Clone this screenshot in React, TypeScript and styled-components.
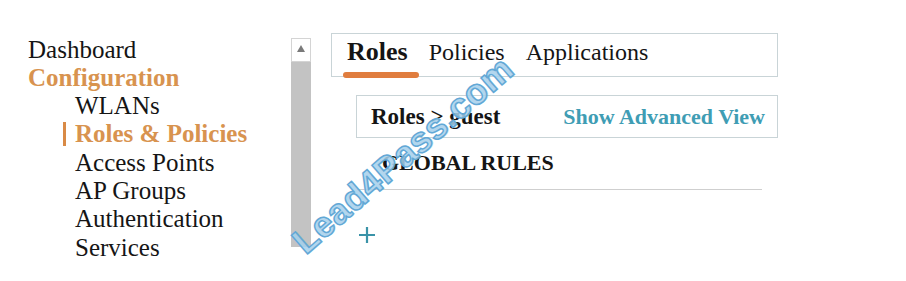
import React from "react";
import styled, { createGlobalStyle } from "styled-components";

const Global = createGlobalStyle`
  html, body { margin: 0; padding: 0; background: #ffffff; }
  body { font-family: "Liberation Serif", "Times New Roman", serif; color: #151515; }
`;

const Page = styled.div`
  position: relative;
  width: 906px;
  height: 281px;
  display: flex;
  align-items: flex-start;
  overflow: hidden;
`;

const Nav = styled.nav`
  width: 263px;
  padding: 35.5px 0 0 28px;
  display: flex;
  flex-direction: column;
`;

const NavItem = styled.div<{ $level?: number; $active?: boolean; $section?: boolean }>`
  position: relative;
  font-size: 25px;
  line-height: 28.3px;
  white-space: nowrap;
  padding-left: ${(p) => (p.$level ? 47 : 0)}px;
  font-weight: ${(p) => (p.$active || p.$section ? 700 : 400)};
  color: ${(p) => (p.$active || p.$section ? "#d8934f" : "#151515")};
  ${(p) =>
    p.$active
      ? `&::before { content: ""; position: absolute; left: 35px; top: 2px; width: 3px; height: 24px; background: #d98a46; }`
      : ""}
`;

const ScrollBar = styled.div`
  margin-top: 38px;
  width: 20px;
  height: 209px;
  display: flex;
  flex-direction: column;
  background: #c3c3c3;
`;

const ScrollButton = styled.div`
  box-sizing: border-box;
  height: 24px;
  background: #ffffff;
  border: 1px solid #d4d4d4;
  display: flex;
  justify-content: center;
  padding-top: 6px;
`;

const Arrow = styled.div`
  width: 0;
  height: 0;
  border-left: 4px solid transparent;
  border-right: 4px solid transparent;
  border-bottom: 7px solid #7a7a7a;
`;

const Main = styled.main`
  margin: 33px 0 0 20px;
  width: 447px;
  display: flex;
  flex-direction: column;
`;

const TabBox = styled.div`
  box-sizing: border-box;
  height: 44px;
  border: 1px solid #c9d4d7;
  display: flex;
  gap: 21px;
  padding: 4px 0 0 15px;
`;

const Tab = styled.div<{ $active?: boolean }>`
  position: relative;
  font-size: ${(p) => (p.$active ? 26 : 24)}px;
  line-height: 28px;
  font-weight: ${(p) => (p.$active ? 700 : 400)};
  color: #151515;
  ${(p) =>
    p.$active
      ? `&::after { content: ""; position: absolute; left: -4px; top: 34px; width: 76px; height: 6px; border-radius: 3px; background: #e07d3e; }`
      : ""}
`;

const SubBox = styled.div`
  box-sizing: border-box;
  margin: 18px 0 0 25px;
  width: 422px;
  height: 43px;
  border: 1px solid #c9d4d7;
  display: flex;
  align-items: center;
  justify-content: space-between;
  padding: 0 12px 0 14px;
  font-size: 22px;
  line-height: 28px;
  font-weight: 700;
`;

const Crumb = styled.span`
  color: #151515;
  font-size: 23px;
`;

const AdvancedLink = styled.span`
  color: #3f9db4;
`;

const Heading = styled.div`
  margin: 11px 0 0 51px;
  font-size: 22px;
  line-height: 28px;
  font-weight: 700;
  color: #151515;
`;

const Rule = styled.div`
  margin: 12px 0 0 26px;
  width: 405px;
  height: 1px;
  background: #cfcfcf;
`;

const AddButton = styled.div`
  margin: 37px 0 0 28px;
  width: 16px;
  height: 16px;
  display: flex;
`;

const Watermark = styled.div`
  position: absolute;
  left: 403px;
  top: 155px;
  transform: translate(-50%, -50%) rotate(-41deg);
  font-family: "Liberation Sans", Arial, sans-serif;
  font-weight: 700;
  font-size: 36px;
  letter-spacing: 0.5px;
  color: rgba(170, 212, 238, 0.8);
  -webkit-text-stroke: 1.5px #62a8d6;
  text-shadow: 1px 1px 0 rgba(120, 170, 210, 0.35);
  white-space: nowrap;
  pointer-events: none;
`;

const navItems = [
  { label: "Dashboard" },
  { label: "Configuration", section: true },
  { label: "WLANs", level: 1 },
  { label: "Roles & Policies", level: 1, active: true },
  { label: "Access Points", level: 1 },
  { label: "AP Groups", level: 1 },
  { label: "Authentication", level: 1 },
  { label: "Services", level: 1 },
];

export default function App() {
  return (
    <>
      <Global />
      <Page>
        <Nav>
          {navItems.map((n) => (
            <NavItem key={n.label} $level={n.level} $active={n.active} $section={n.section}>
              {n.label}
            </NavItem>
          ))}
        </Nav>
        <ScrollBar>
          <ScrollButton>
            <Arrow />
          </ScrollButton>
        </ScrollBar>
        <Main>
          <TabBox>
            <Tab $active>Roles</Tab>
            <Tab>Policies</Tab>
            <Tab>Applications</Tab>
          </TabBox>
          <SubBox>
            <Crumb>Roles &gt; guest</Crumb>
            <AdvancedLink>Show Advanced View</AdvancedLink>
          </SubBox>
          <Heading>GLOBAL RULES</Heading>
          <Rule />
          <AddButton>
            <svg width="16" height="16" viewBox="0 0 16 16">
              <path d="M8 0 V16 M0 8 H16" stroke="#3a93a8" strokeWidth="2.2" />
            </svg>
          </AddButton>
        </Main>
        <Watermark>Lead4Pass.com</Watermark>
      </Page>
    </>
  );
}
